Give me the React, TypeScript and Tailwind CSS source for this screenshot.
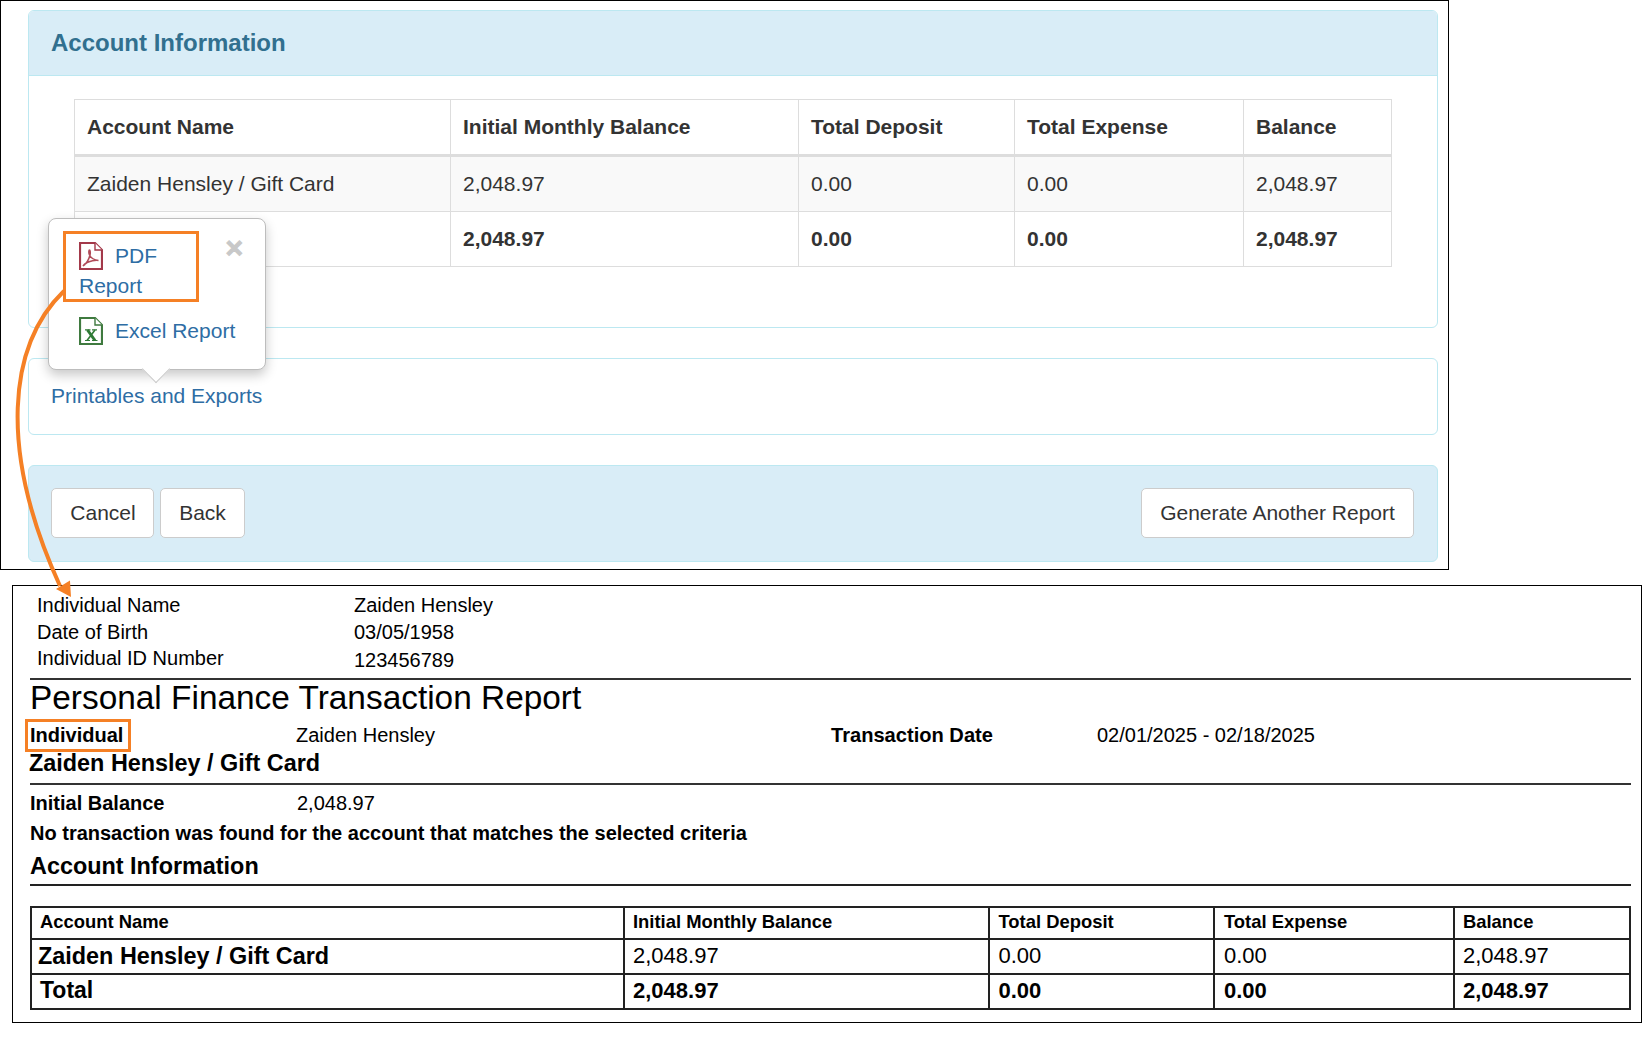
const font = "[font-family:'Liberation_Sans',Arial,sans-serif]";

const topCols = [376, 348, 216, 229, 148];
const lowCols = [593, 364.5, 225.5, 240, 176];

function PdfIcon() {
  return (
    <svg viewBox="0 0 24 28" className="w-[24px] h-[28px] shrink-0">
      <path d="M1 1h15l7 7v19H1z" fill="#fff" stroke="#a3394a" strokeWidth="2.200" />
      <path d="M16 1v7h7" fill="#fff" stroke="#a3394a" strokeWidth="1.400" />
      <path d="M4 24c3-2 6-7 7-11 .5-2 .3-5-.5-5s-1 3 0 5c1.500 3 4 5 9 5.500-3-.5-9 .5-12 2.500-2 1-3.500 3-3.500 3z" fill="none" stroke="#b04a58" strokeWidth="1.500" />
    </svg>
  );
}

function ExcelIcon() {
  return (
    <svg viewBox="0 0 24 28" className="w-[24px] h-[28px] shrink-0">
      <path d="M1 1h15l7 7v19H1z" fill="#fff" stroke="#3f7a3f" strokeWidth="2.200" />
      <path d="M16 1v7h7" fill="#fff" stroke="#3f7a3f" strokeWidth="1.400" />
      <path d="M8.500 13l7.500 10.500" fill="none" stroke="#2f7a35" strokeWidth="3" />
      <path d="M16 13L8 23.500" fill="none" stroke="#2f7a35" strokeWidth="1.600" />
      <path d="M6 12.800h5.500M13 12.800h5M6 23.500h5M13 23.500h5.500" fill="none" stroke="#2f7a35" strokeWidth="1.200" />
    </svg>
  );
}

function Button({ children, className }: { children: string; className: string }) {
  return (
    <button className={`h-[50px] bg-white border border-[#ccc] rounded-[5px] text-[21px] text-[#333] ${className}`}>
      {children}
    </button>
  );
}

function TopTable() {
  const cell = "border border-[#ddd] px-[12px] text-[21px] text-[#333] text-left align-middle";
  const rows = [
    { h: "h-[56px]", bg: "bg-[#f9f9f9]", weight: "font-normal", vals: ["Zaiden Hensley / Gift Card", "2,048.97", "0.00", "0.00", "2,048.97"] },
    { h: "h-[55px]", bg: "bg-white", weight: "font-bold", vals: ["", "2,048.97", "0.00", "0.00", "2,048.97"] },
  ];
  return (
    <table className="table-fixed border-collapse w-[1317px]">
      <colgroup>
        {topCols.map((w, i) => (
          <col key={i} style={{ width: w }} />
        ))}
      </colgroup>
      <thead>
        <tr className="h-[56px]">
          {["Account Name", "Initial Monthly Balance", "Total Deposit", "Total Expense", "Balance"].map((h) => (
            <th key={h} className={`${cell} font-bold border-b-[3px]`}>
              {h}
            </th>
          ))}
        </tr>
      </thead>
      <tbody>
        {rows.map((r) => (
          <tr key={r.h + r.bg} className={`${r.h} ${r.bg}`}>
            {r.vals.map((v, i) => (
              <td key={i} className={`${cell} ${r.weight}`}>
                {v}
              </td>
            ))}
          </tr>
        ))}
      </tbody>
    </table>
  );
}

function LowTable() {
  const cell = "border-[2px] border-[#222] text-black text-left align-middle leading-[1.2]";
  const pad = ["pl-[8px]", "pl-[8px]", "pl-[9px]", "pl-[9px]", "pl-[8px]"];
  return (
    <table className="table-fixed border-collapse w-[1599px] mt-[20px]">
      <colgroup>
        {lowCols.map((w, i) => (
          <col key={i} style={{ width: w }} />
        ))}
      </colgroup>
      <thead>
        <tr className="h-[32px]">
          {["Account Name", "Initial Monthly Balance", "Total Deposit", "Total Expense", "Balance"].map((h, i) => (
            <th key={h} className={`${cell} ${pad[i]} text-[18.400px] font-bold`}>
              {h}
            </th>
          ))}
        </tr>
      </thead>
      <tbody>
        <tr className="h-[35px]">
          <td className={`${cell} text-[23.400px] font-bold pl-[6px]`}>Zaiden Hensley / Gift Card</td>
          {["2,048.97", "0.00", "0.00", "2,048.97"].map((v, i) => (
            <td key={i} className={`${cell} ${pad[i + 1]} text-[22px]`}>
              {v}
            </td>
          ))}
        </tr>
        <tr className="h-[35px]">
          {["Total", "2,048.97", "0.00", "0.00", "2,048.97"].map((v, i) => (
            <td key={i} className={`${cell} ${pad[i]} ${i === 0 ? "text-[23px]" : "text-[22px]"} font-bold`}>
              {v}
            </td>
          ))}
        </tr>
      </tbody>
    </table>
  );
}

function Popover() {
  return (
    <div className="absolute left-[48px] top-[218px] w-[218px] h-[152px] bg-white border border-[#bdbdbd] rounded-[8px] shadow-[0_5px_12px_rgba(0,0,0,0.22)] z-10">
      <div className="absolute left-[14px] top-[12px] w-[136px] h-[71px] border-[3px] border-[#f58025] pl-[13px] pt-[7px] text-[21px] leading-[30px] text-[#2e6da4]">
        <div className="flex items-center gap-[12px]">
          <PdfIcon />
          <span>PDF</span>
        </div>
        <div>Report</div>
      </div>
      <div className="absolute right-[22px] top-[9px] text-[30px] leading-[40px] font-bold text-[#c8c8c8] [-webkit-text-stroke:1px_#c8c8c8]">×</div>
      <div className="absolute left-[30px] top-[96px] flex items-center gap-[12px] text-[21px] text-[#2e6da4]">
        <ExcelIcon />
        <span>Excel Report</span>
      </div>
      <div className="absolute left-[97px] top-[140px] w-[20px] h-[20px] rotate-45 bg-white border-r border-b border-[#c9c9c9]" />
    </div>
  );
}

function Connector() {
  return (
    <svg className="absolute left-0 top-0 z-20 pointer-events-none" width="120" height="620" viewBox="0 0 120 620" fill="none">
      <path d="M64 291 C 8 345, -2 450, 60 586" stroke="#f58025" strokeWidth="4" />
      <path d="M56 589 L70 580.500 L71 597 Z" fill="#f58025" />
    </svg>
  );
}

export default function App() {
  return (
    <div className={`relative w-[1651px] h-[1037px] bg-white overflow-hidden ${font}`}>
      <div className="w-[1449px] h-[570px] border border-black pt-[9px] pl-[27px]">
        <div className="w-[1410px] h-[318px] border border-[#bce8f1] rounded-[6px] overflow-hidden">
          <div className="h-[65px] bg-[#d9edf7] border-b border-[#bce8f1] pl-[22px] flex items-center text-[24px] font-bold text-[#31708f]">
            Account Information
          </div>
          <div className="pt-[23px] pl-[45px]">
            <TopTable />
          </div>
        </div>
        <div className="w-[1410px] h-[77px] mt-[30px] border border-[#bce8f1] rounded-[6px] pl-[22px] pt-[23px] text-[21px] leading-[28px] text-[#2e6da4]">
          Printables and Exports
        </div>
        <div className="w-[1410px] h-[97px] mt-[30px] bg-[#d9edf7] border border-[#bce8f1] rounded-[6px] pl-[22px] pr-[23px] pt-[22px] flex gap-[6px]">
          <Button className="w-[103px] pl-[1px]">Cancel</Button>
          <Button className="w-[85px]">Back</Button>
          <Button className="w-[273px] ml-auto">Generate Another Report</Button>
        </div>
      </div>

      <div className="ml-[12px] mt-[15px] w-[1630px] h-[438px] border border-black pl-[17px] pt-[6px] text-black">
        <div className="pl-[7px] text-[20px]">
          {[
            ["Individual Name", "Zaiden Hensley", ""],
            ["Date of Birth", "03/05/1958", ""],
            ["Individual ID Number", "123456789", "mt-[4px]"],
          ].map(([a, b, c]) => (
            <div key={a} className="flex h-[26.500px] items-center">
              <span className="w-[317px]">{a}</span>
              <span className={c}>{b}</span>
            </div>
          ))}
        </div>
        <div className="w-[1601px] h-[2px] bg-[#333] mt-[6px]" />
        <div className="text-[33.400px] leading-[36px]">Personal Finance Transaction Report</div>
        <div className="flex items-center h-[34px] mt-[2px] text-[20px] leading-[30px]">
          <span className="w-[266px] font-bold relative">
            Individual
            <span className="absolute -left-[5px] -top-[1px] w-[106px] h-[33px] border-[3px] border-[#f58025]" />
          </span>
          <span className="w-[535px]">Zaiden Hensley</span>
          <span className="w-[266px] font-bold text-[20.100px] leading-[30px]">Transaction Date</span>
          <span>02/01/2025 - 02/18/2025</span>
        </div>
        <div className="text-[23.400px] leading-[22px] font-bold -ml-[1px]">Zaiden Hensley / Gift Card</div>
        <div className="w-[1601px] h-[2px] bg-[#333] mt-[9px]" />
        <div className="flex items-center h-[30px] mt-[3px] text-[20px]">
          <span className="w-[267px] font-bold">Initial Balance</span>
          <span>2,048.97</span>
        </div>
        <div className="text-[20px] leading-[30px] font-bold">No transaction was found for the account that matches the selected criteria</div>
        <div className="text-[23.400px] leading-[28px] font-bold mt-[4px]">Account Information</div>
        <div className="w-[1601px] h-[2px] bg-[#222] mt-[4px]" />
        <LowTable />
      </div>

      <Popover />
      <Connector />
    </div>
  );
}
